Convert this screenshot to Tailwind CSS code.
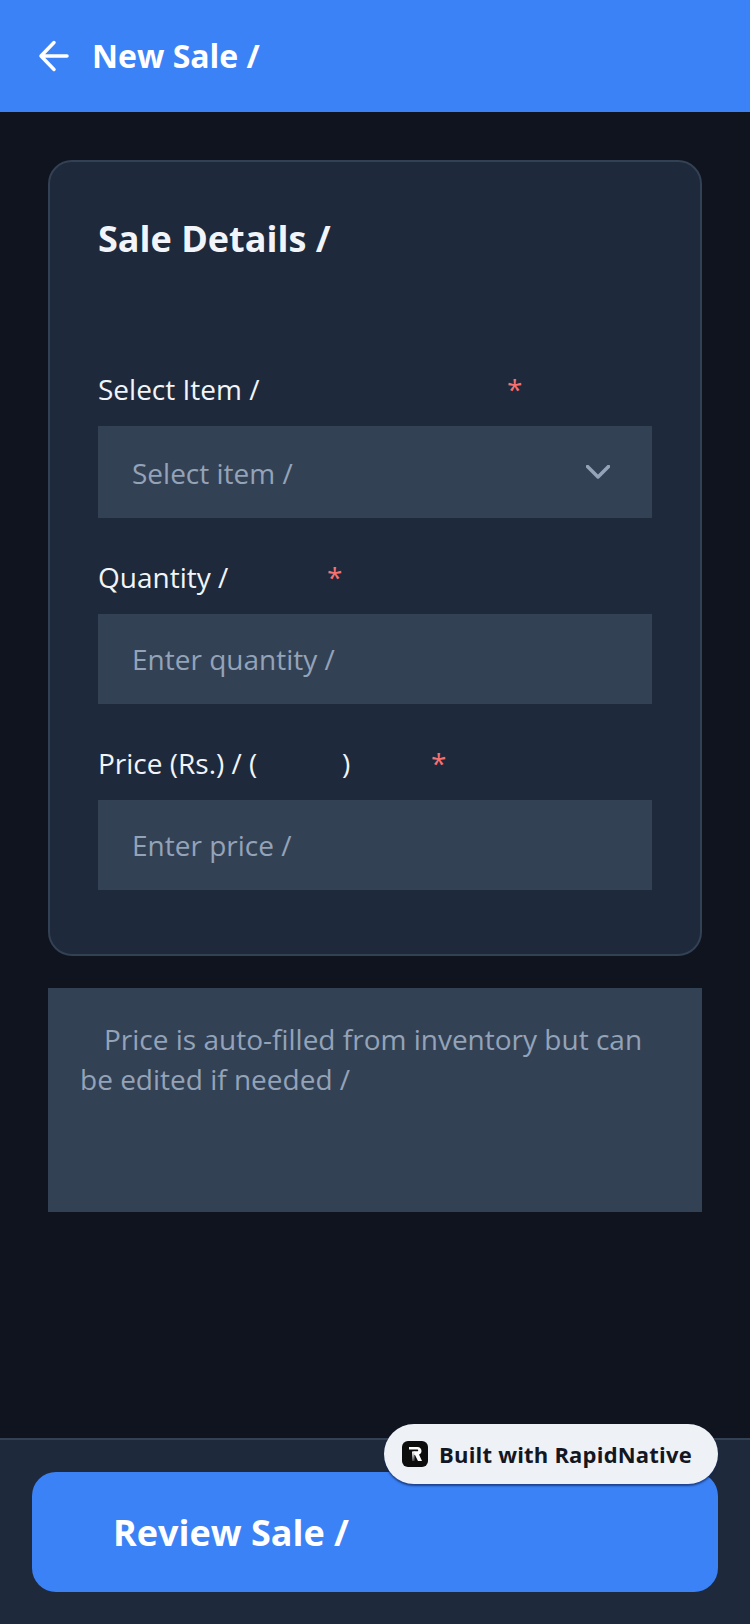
<!DOCTYPE html>
<html lang="en">
  <head>
    <meta charset="UTF-8" />
    <meta name="viewport" content="width=device-width, initial-scale=1.0" />
    <title>New Sale</title>
    <script src="https://cdn.jsdelivr.net/npm/@tailwindcss/browser@4"></script>
  </head>
  <body class="bg-[#10141f] font-['Open_Sans','Noto_Sans',sans-serif]">
    <div class="relative w-[750px] h-[1624px] flex flex-col overflow-hidden">
      <!-- Header -->
      <header class="h-[112px] shrink-0 bg-[#3b82f6] flex items-center pl-[38px] gap-[22px]">
        <svg class="w-[32px] h-[32px]" viewBox="0 0 32 32" fill="none" stroke="#fff" stroke-width="3.500" stroke-linecap="round" stroke-linejoin="round">
          <path d="M29 16H3M16 2.500 3 16l13 13.500" />
        </svg>
        <h1 class="text-[32px] leading-[44px] font-bold text-white">New Sale /</h1>
      </header>

      <!-- Content -->
      <main class="flex-1 px-[48px] pt-[48px]">
        <section class="h-[796px] bg-[#1e293b] border-2 border-[#334155] rounded-[24px] px-[48px] pt-[52px]">
          <h2 class="text-[36px] leading-[50px] font-bold text-[#f1f5f9]">Sale Details /</h2>

          <div class="mt-[103px] relative h-[44px] text-[28px] leading-[44px] text-[#f1f5f9]">
            Select Item /
            <span class="absolute left-[409px] top-0 text-[#f87171]">*</span>
          </div>
          <div class="mt-[15px] h-[92px] bg-[#334155] flex items-center justify-between pl-[34px] pr-[42px]">
            <span class="text-[28px] leading-[40px] pt-[2px] text-[#94a3b8]">Select item /</span>
            <svg class="w-[24px] h-[14px]" viewBox="0 0 24 14" fill="none" stroke="#94a3b8" stroke-width="3.500" stroke-linecap="round" stroke-linejoin="round">
              <path d="M1.5 1.5 12 12 22.500 1.500" />
            </svg>
          </div>

          <div class="mt-[37px] relative h-[44px] text-[28px] leading-[44px] text-[#f1f5f9]">
            Quantity /
            <span class="absolute left-[229px] top-0 text-[#f87171]">*</span>
          </div>
          <div class="mt-[15px] h-[90px] bg-[#334155] flex items-center pl-[34px]">
            <span class="text-[28px] text-[#94a3b8]">Enter quantity /</span>
          </div>

          <div class="mt-[37px] relative h-[44px] text-[28px] leading-[44px] text-[#f1f5f9]">
            Price (Rs.) / (<span class="absolute left-[244px] top-0">)</span>
            <span class="absolute left-[333px] top-0 text-[#f87171]">*</span>
          </div>
          <div class="mt-[15px] h-[90px] bg-[#334155] flex items-center pl-[34px]">
            <span class="text-[28px] text-[#94a3b8]">Enter price /</span>
          </div>
        </section>

        <section class="mt-[32px] h-[224px] bg-[#334155] px-[32px] pt-[31px] text-[28px] leading-[40px] text-[#94a3b8] indent-[24px]">
          Price is auto-filled from inventory but can be edited if needed /
        </section>
      </main>

      <!-- Footer -->
      <footer class="h-[186px] shrink-0 bg-[#1e293b] border-t-2 border-[#334155] px-[32px] pt-[32px]">
        <button class="w-full h-[120px] bg-[#3b82f6] rounded-[24px] text-left pl-[81px] pt-[2px] text-[36px] font-bold text-white">Review Sale /</button>
      </footer>

      <!-- Badge -->
      <div class="absolute left-[384px] top-[1424px] w-[334px] h-[60px] rounded-full bg-[#eef1f6] shadow-[0_2px_2px_rgba(15,40,100,0.7)] flex items-center pl-[18px] gap-[11px]">
        <div class="w-[26px] h-[26px] rounded-[6px] bg-[#0d0d0d] flex items-center justify-center">
          <svg class="w-[16px] h-[16px]" viewBox="0 0 16 16">
            <defs>
              <linearGradient id="rStem" x1="0" y1="0" x2="0" y2="1">
                <stop offset="0" stop-color="#fff" />
                <stop offset="1" stop-color="#444" />
              </linearGradient>
            </defs>
            <path d="M2 1h8.500C13 1 14.500 2.800 14.500 5c0 1.700-1 3-2.500 3.600L15 15h-4L8 9H6.500V5.200h3.700c.7 0 1-.4 1-.8s-.3-.8-1-.8H2z" fill="#fff" />
            <path d="M5 5.500h2.500V15H5z" fill="url(#rStem)" />
          </svg>
        </div>
        <span class="text-[22px] font-bold tracking-[0.2px] text-[#14171f] whitespace-nowrap">Built with RapidNative</span>
      </div>
    </div>
  </body>
</html>
